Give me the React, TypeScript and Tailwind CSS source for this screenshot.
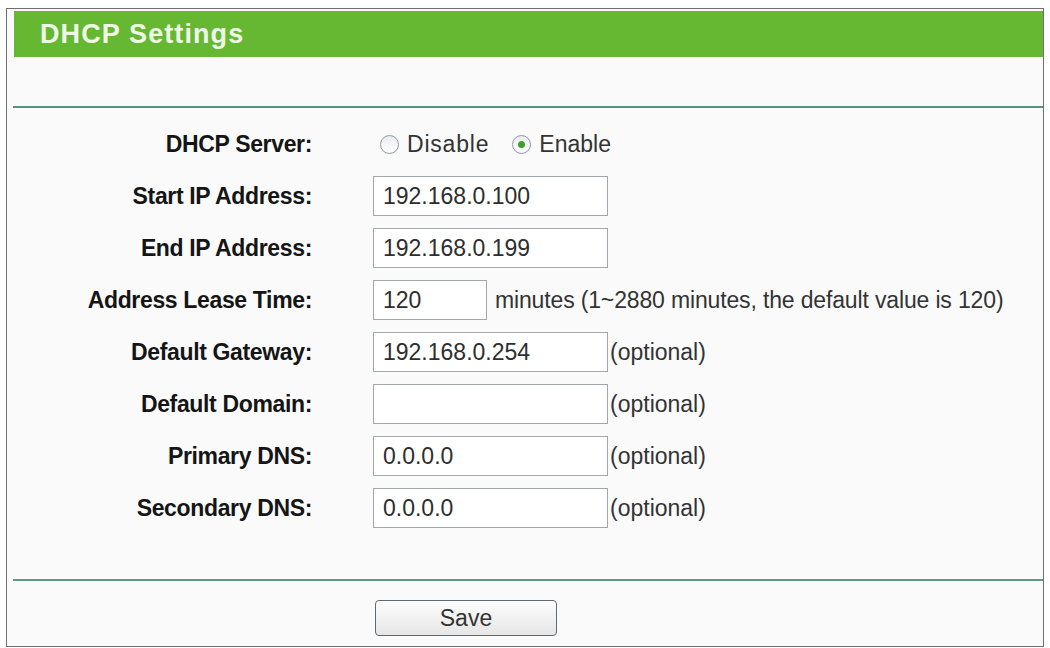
import React from 'react';

// One label/value row of the DHCP form
interface RowProps {
  label: string;
  children: React.ReactNode;
}

const Row: React.FC<RowProps> = ({ label, children }) => (
  <div className="flex h-[52px] items-center">
    <div className="w-[306px] pr-[1px] text-right text-[23px] font-bold tracking-[-0.35px] text-[#151515]">
      {label}
    </div>
    <div className="ml-[60px] flex items-center text-[23px] text-[#333]">{children}</div>
  </div>
);

const Field: React.FC<{ value: string; width?: string }> = ({ value, width = 'w-[235px]' }) => (
  <div
    className={`${width} flex h-[40px] items-center border border-[#a3a8ad] bg-white pl-[9px] text-[23px] text-[#2e2e2e]`}
  >
    {value}
  </div>
);

const Radio: React.FC<{ checked?: boolean }> = ({ checked }) => (
  <span className="flex h-[19px] w-[19px] items-center justify-center rounded-full border-[1.5px] border-[#8d9aa6] bg-gradient-to-b from-[#e9edf0] to-white">
    {checked && <span className="h-[7px] w-[7px] rounded-full bg-[#3e9f2e]" />}
  </span>
);

const Optional = () => <span className="ml-[2px] text-[23px] text-[#333]">(optional)</span>;

export default function App() {
  const [enabled, setEnabled] = React.useState(true);

  return (
    <div className="h-[648px] w-[1050px] bg-white pl-[6px] pt-[8px] font-['Liberation_Sans',Arial,sans-serif]">
      <div className="flex h-[639px] w-[1038px] flex-col border border-[#707070] bg-[#fafafa]">
        <div className="pl-[7px] pt-[2px]">
          <div className="flex h-[46px] items-center bg-[#66b832] pl-[26px] text-[27px] font-bold tracking-[1.1px] text-[#eff8e6]">
            DHCP Settings
          </div>
        </div>

        <div className="ml-[6px] mt-[49px] h-[2px] bg-[#5d8f7e]" />

        <div className="mt-[10px]">
          <Row label="DHCP Server:">
            <div className="ml-[7px] flex items-center">
              <button type="button" onClick={() => setEnabled(false)} className="flex items-center">
                <Radio checked={!enabled} />
              </button>
              <span className="ml-[8px] tracking-[0.8px]">Disable</span>
              <button type="button" onClick={() => setEnabled(true)} className="ml-[23px] flex items-center">
                <Radio checked={enabled} />
              </button>
              <span className="ml-[8px]">Enable</span>
            </div>
          </Row>
          <Row label="Start IP Address:">
            <Field value="192.168.0.100" />
          </Row>
          <Row label="End IP Address:">
            <Field value="192.168.0.199" />
          </Row>
          <Row label="Address Lease Time:">
            <Field value="120" width="w-[114px]" />
            <span className="ml-[8px] tracking-[-0.15px]">minutes (1~2880 minutes, the default value is 120)</span>
          </Row>
          <Row label="Default Gateway:">
            <Field value="192.168.0.254" />
            <Optional />
          </Row>
          <Row label="Default Domain:">
            <Field value="" />
            <Optional />
          </Row>
          <Row label="Primary DNS:">
            <Field value="0.0.0.0" />
            <Optional />
          </Row>
          <Row label="Secondary DNS:">
            <Field value="0.0.0.0" />
            <Optional />
          </Row>
        </div>

        <div className="ml-[6px] mt-[45px] h-[2px] bg-[#5d9a86]" />

        <div className="mt-[19px] pl-[368px]">
          <button
            type="button"
            className="flex h-[36px] w-[182px] items-center justify-center rounded-[4px] border-[1.5px] border-[#5e6873] bg-gradient-to-b from-[#fdfdfd] to-[#e6e6e6] text-[23px] text-[#333]"
          >
            Save
          </button>
        </div>
      </div>
    </div>
  );
}
